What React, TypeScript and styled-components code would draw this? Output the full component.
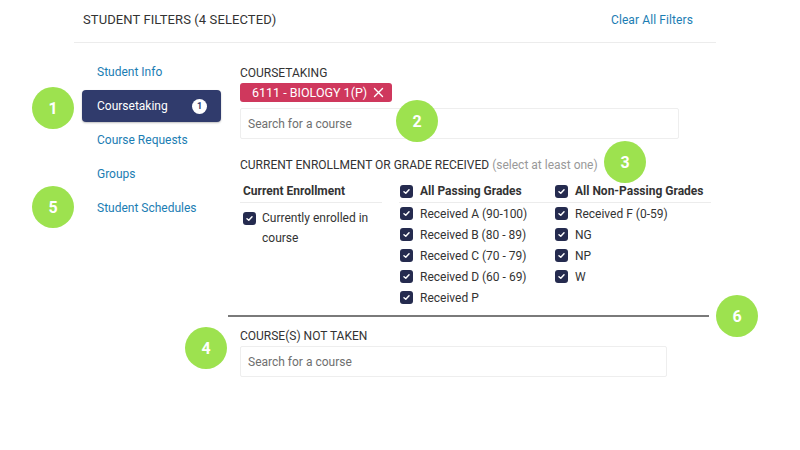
import React from "react";
import styled, { createGlobalStyle } from "styled-components";

const Global = createGlobalStyle`
  html, body { margin: 0; padding: 0; background: #fff; }
  body { font-family: Roboto, "Liberation Sans", Arial, sans-serif; color: #333; }
  * { box-sizing: border-box; }
`;

const Page = styled.div`
  position: relative;
  width: 800px;
  height: 450px;
  overflow: hidden;
  background: #fff;
`;

const Panel = styled.div`
  margin-left: 74px;
  width: 642px;
`;

const Header = styled.div`
  height: 43px;
  border-bottom: 1px solid #ececec;
  display: flex;
  align-items: center;
  justify-content: space-between;
  padding: 0 23px 3px 9px;
`;

const Title = styled.div`
  font-size: 13px;
  color: #333;
  letter-spacing: 0.1px;
`;

const ClearLink = styled.a`
  font-size: 12px;
  color: #1b7db3;
  text-decoration: none;
  letter-spacing: 0.1px;
`;

const Body = styled.div`
  display: flex;
  gap: 19px;
  padding-left: 8px;
`;

const Sidebar = styled.nav`
  width: 139px;
  padding-top: 13px;
  display: flex;
  flex-direction: column;
  gap: 2px;
`;

const NavItem = styled.div<{ $active?: boolean }>`
  height: 32px;
  display: flex;
  align-items: center;
  justify-content: space-between;
  padding: 0 15px;
  font-size: 12px;
  border-radius: 4px;
  color: ${(p) => (p.$active ? "#fff" : "#1b7db3")};
  background: ${(p) => (p.$active ? "#303b6c" : "transparent")};
  box-shadow: ${(p) => (p.$active ? "0 1px 2px rgba(0,0,0,0.25)" : "none")};
`;

const NavBadge = styled.span`
  width: 15px;
  height: 15px;
  border-radius: 50%;
  background: #fff;
  color: #303b6c;
  font-size: 9px;
  font-weight: 700;
  display: flex;
  align-items: center;
  justify-content: center;
  margin-right: -1px;
`;

const Main = styled.div`
  padding-top: 22px;
  display: flex;
  flex-direction: column;
`;

const Label = styled.div<{ $mt?: number }>`
  font-size: 12px;
  line-height: 16px;
  color: #333;
  margin-top: ${(p) => p.$mt ?? 0}px;
`;

const Hint = styled.span`
  color: #999;
`;

const Chip = styled.div`
  margin-top: 2px;
  align-self: flex-start;
  width: 152px;
  height: 19px;
  border-radius: 3px;
  background: #cf385d;
  color: #fff;
  font-size: 12.5px;
  display: flex;
  align-items: center;
  justify-content: space-between;
  padding: 0 8px 0 12px;
`;

const SearchBox = styled.div<{ $w: number; $mt: number }>`
  width: ${(p) => p.$w}px;
  height: 31px;
  margin-top: ${(p) => p.$mt}px;
  border: 1px solid #eeeeee;
  border-radius: 2px;
  display: flex;
  align-items: center;
  padding-left: 7px;
  font-size: 12px;
  color: #6f6f6f;
`;

const Columns = styled.div`
  display: flex;
  margin-top: 8px;
`;

const Column = styled.div<{ $w: number; $ml?: number }>`
  width: ${(p) => p.$w}px;
  margin-left: ${(p) => p.$ml ?? 0}px;
  display: flex;
  flex-direction: column;
`;

const ColHead = styled.div<{ $pl?: number }>`
  height: 22px;
  border-bottom: 1px solid #ececec;
  display: flex;
  align-items: center;
  gap: 7px;
  padding-left: ${(p) => p.$pl ?? 0}px;
  padding-bottom: 1px;
  font-size: 12px;
  font-weight: 700;
  color: #333;
`;

const Row = styled.div<{ $pl?: number }>`
  height: 21px;
  display: flex;
  align-items: center;
  gap: 7px;
  padding-left: ${(p) => p.$pl ?? 0}px;
  font-size: 12px;
  color: #333;
`;

const WrapRow = styled.div`
  display: flex;
  align-items: flex-start;
  gap: 6px;
  padding: 5px 0 0 3px;
  font-size: 12px;
  line-height: 20px;
  color: #333;
  & > span:first-child { margin-top: 4px; }
`;

const Box = styled.span`
  width: 13px;
  height: 13px;
  flex: none;
  border-radius: 3px;
  background: #252b4f;
  display: inline-flex;
  align-items: center;
  justify-content: center;
`;

const Divider = styled.div`
  margin: 7px 0 0 -12px;
  width: 481px;
  height: 2px;
  background: #7a7a7a;
`;

const Marker = styled.div<{ $x: number; $y: number }>`
  position: absolute;
  left: ${(p) => p.$x - 21}px;
  top: ${(p) => p.$y - 21}px;
  width: 42px;
  height: 42px;
  border-radius: 50%;
  background: #9de24f;
  color: #fff;
  font-size: 16px;
  font-weight: 700;
  display: flex;
  align-items: center;
  justify-content: center;
`;

const Check = () => (
  <Box>
    <svg width="9" height="9" viewBox="0 0 10 10">
      <path d="M2.2 5.2 L4.2 7 L7.8 3" fill="none" stroke="#fff" strokeWidth="1.6" strokeLinecap="round" strokeLinejoin="round" />
    </svg>
  </Box>
);

const CloseX = () => (
  <svg width="11" height="11" viewBox="0 0 11 11">
    <path d="M1.5 1.5 L9.5 9.5 M9.5 1.5 L1.5 9.5" stroke="#fff" strokeWidth="1.4" strokeLinecap="round" />
  </svg>
);

const passing = ["Received A (90-100)", "Received B (80 - 89)", "Received C (70 - 79)", "Received D (60 - 69)", "Received P"];
const nonPassing = ["Received F (0-59)", "NG", "NP", "W"];

const markers = [
  { n: "1", x: 53, y: 108 },
  { n: "2", x: 417, y: 121 },
  { n: "3", x: 625, y: 162 },
  { n: "4", x: 206, y: 348 },
  { n: "5", x: 53, y: 207 },
  { n: "6", x: 737, y: 316 },
];

export default function App() {
  return (
    <Page>
      <Global />
      <Panel>
        <Header>
          <Title>STUDENT FILTERS (4 SELECTED)</Title>
          <ClearLink>Clear All Filters</ClearLink>
        </Header>
        <Body>
          <Sidebar>
            <NavItem>Student Info</NavItem>
            <NavItem $active>
              Coursetaking
              <NavBadge>1</NavBadge>
            </NavItem>
            <NavItem>Course Requests</NavItem>
            <NavItem>Groups</NavItem>
            <NavItem>Student Schedules</NavItem>
          </Sidebar>
          <Main>
            <Label>COURSETAKING</Label>
            <Chip>
              <span>6111 - BIOLOGY 1(P)</span>
              <CloseX />
            </Chip>
            <SearchBox $w={439} $mt={6}>Search for a course</SearchBox>
            <Label $mt={18}>
              CURRENT ENROLLMENT OR GRADE RECEIVED <Hint>(select at least one)</Hint>
            </Label>
            <Columns>
              <Column $w={142}>
                <ColHead $pl={3}>Current Enrollment</ColHead>
                <WrapRow>
                  <Check />
                  <span>
                    Currently enrolled in
                    <br />
                    course
                  </span>
                </WrapRow>
              </Column>
              <Column $w={156} $ml={17}>
                <ColHead $pl={1}>
                  <Check />
                  All Passing Grades
                </ColHead>
                {passing.map((t) => (
                  <Row key={t} $pl={1}>
                    <Check />
                    {t}
                  </Row>
                ))}
              </Column>
              <Column $w={156}>
                <ColHead>
                  <Check />
                  All Non-Passing Grades
                </ColHead>
                {nonPassing.map((t) => (
                  <Row key={t}>
                    <Check />
                    {t}
                  </Row>
                ))}
              </Column>
            </Columns>
            <Divider />
            <Label $mt={11}>COURSE(S) NOT TAKEN</Label>
            <SearchBox $w={427} $mt={2}>Search for a course</SearchBox>
          </Main>
        </Body>
      </Panel>
      {markers.map((m) => (
        <Marker key={m.n} $x={m.x} $y={m.y}>
          {m.n}
        </Marker>
      ))}
    </Page>
  );
}
